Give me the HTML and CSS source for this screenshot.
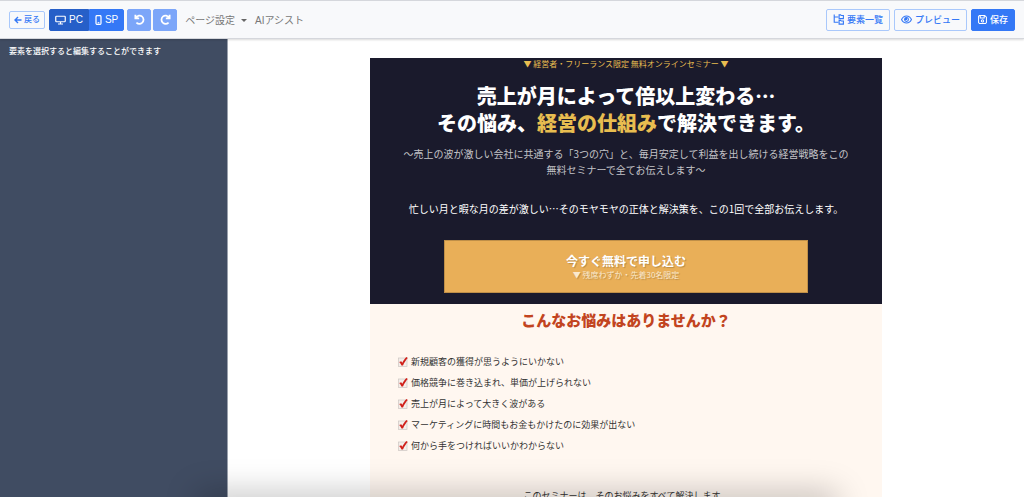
FILE: index.html
```
<!DOCTYPE html>
<html lang="ja">
<head>
    <meta charset="UTF-8">
    <meta name="viewport" content="width=device-width, initial-scale=1.0">
    <title>ページ編集</title>
    <link rel="stylesheet" href="styles.css">
</head>
<body>
    <svg class="defs" aria-hidden="true">
        <symbol id="check" viewBox="0 0 20 20">
            <rect x="1" y="2" width="17" height="17" fill="#f4eeea" stroke="#cfc9c5" stroke-width="1.500"/>
            <path d="M2.500 10l4-1.500 2 3C11 7 14 2.500 17 0l2.500 2C16 6 12.500 11 10 17H7C6 14.500 4.500 12 2.500 10z" fill="#d0201a"/>
        </symbol>
    </svg>

    <header class="toolbar">
        <a class="btn btn-outline btn-back" href="#">
            <svg class="icon-sm" viewBox="0 0 16 16" fill="none" stroke="currentColor" stroke-width="2.800"><path d="M15 8H2M8 2L2 8l6 6"/></svg>
            戻る
        </a>
        <div class="btn-group">
            <button class="btn btn-primary active">
                <svg class="icon-pc" viewBox="0 0 22 18" fill="none" stroke="currentColor" stroke-width="2.400"><rect x="1.500" y="1.500" width="19" height="11" rx="1.500"/><path d="M11 13v4M6 17h10"/></svg>
                PC
            </button>
            <button class="btn btn-primary">
                <svg class="icon-sp" viewBox="0 0 12 18" fill="none" stroke="currentColor" stroke-width="2.200"><rect x="1.500" y="1" width="9" height="16" rx="2"/><path d="M4.500 14h3"/></svg>
                SP
            </button>
        </div>
        <div class="history">
            <button class="btn btn-primary" aria-label="元に戻す" disabled>
                <svg class="icon" viewBox="0 0 16 16" fill="none" stroke="currentColor" stroke-width="2.600"><path d="M2 1v5.500h5.500M2.500 6C5 2 9 1.500 11.500 3.500c3 2.500 3 6.500.5 9-2.500 2.300-6 2.200-8.500 0"/></svg>
            </button>
            <button class="btn btn-primary" aria-label="やり直す" disabled>
                <svg class="icon" viewBox="0 0 16 16" fill="none" stroke="currentColor" stroke-width="2.600"><path d="M14 1v5.500H8.500M13.500 6C11 2 7 1.500 4.500 3.500c-3 2.500-3 6.500-.5 9 2.500 2.300 6 2.200 8.500 0"/></svg>
            </button>
        </div>
        <nav class="menu">
            <a class="dropdown" href="#">ページ設定</a>
            <a href="#">AIアシスト</a>
        </nav>
        <div class="actions">
            <button class="btn btn-outline">
                <svg class="icon" viewBox="0 0 18 18" fill="none" stroke="currentColor" stroke-width="1.800"><path d="M2 1v12.500h7M2 5h7"/><path d="M10 1.500h2.500l1 1H17v5h-7zM10 10.500h2.500l1 1H17v5h-7z"/></svg>
                要素一覧
            </button>
            <button class="btn btn-outline">
                <svg class="icon" viewBox="0 0 20 16" fill="none" stroke="currentColor" stroke-width="2"><path d="M1 8c4-8.500 14-8.500 18 0-4 8.500-14 8.500-18 0z"/><circle cx="10" cy="8" r="3.500"/><circle cx="9" cy="7" r="1.200" fill="currentColor"/></svg>
                プレビュー
            </button>
            <button class="btn btn-primary">
                <svg class="icon-sm" viewBox="0 0 16 16" fill="none" stroke="currentColor" stroke-width="1.800"><path d="M1 2.500L2.500 1H12l3 3v9.500L13.500 15h-11L1 13.500zM4 1v4.500h7V1"/><circle cx="8" cy="10.500" r="2"/></svg>
                保存
            </button>
        </div>
    </header>

    <div class="editor">
        <aside class="sidebar">
            <p>要素を選択すると編集することができます</p>
        </aside>
        <main class="canvas">
            <article class="page">
                <section class="hero">
                    <p class="hero-label">▼ 経営者・フリーランス限定 無料オンラインセミナー ▼</p>
                    <h1>売上が月によって倍以上変わる…<br>その悩み、<em>経営の仕組み</em>で解決できます。</h1>
                    <p class="hero-sub">〜売上の波が激しい会社に共通する「3つの穴」と、毎月安定して利益を出し続ける経営戦略をこの<br>無料セミナーで全てお伝えします〜</p>
                    <p class="hero-lead">忙しい月と暇な月の差が激しい…そのモヤモヤの正体と解決策を、この1回で全部お伝えします。</p>
                    <a class="cta" href="#">
                        <strong>今すぐ無料で申し込む</strong>
                        <small>▼ 残席わずか・先着30名限定</small>
                    </a>
                </section>
                <section class="worries">
                    <h2>こんなお悩みはありませんか？</h2>
                    <ul>
                        <li><svg class="check"><use href="#check"/></svg>新規顧客の獲得が思うようにいかない</li>
                        <li><svg class="check"><use href="#check"/></svg>価格競争に巻き込まれ、単価が上げられない</li>
                        <li><svg class="check"><use href="#check"/></svg>売上が月によって大きく波がある</li>
                        <li><svg class="check"><use href="#check"/></svg>マーケティングに時間もお金もかけたのに効果が出ない</li>
                        <li><svg class="check"><use href="#check"/></svg>何から手をつければいいかわからない</li>
                    </ul>
                    <p class="worries-end">このセミナーは、そのお悩みをすべて解決します。</p>
                </section>
            </article>
        </main>
    </div>
    <div class="bottom-shade"></div>
</body>
</html>
```

FILE: styles.css
```
* {
    box-sizing: border-box;
}
body {
    margin: 0;
    height: 100vh;
    display: flex;
    flex-direction: column;
    overflow: hidden;
    font-family: "Liberation Sans", "Noto Sans CJK JP", sans-serif;
    font-size: 10px;
    color: #333;
    background-color: #fff;
}
h1, h2, p, ul {
    margin: 0;
    padding: 0;
}
a {
    color: inherit;
    text-decoration: none;
}
.defs {
    position: absolute;
    width: 0;
    height: 0;
}

/* toolbar */
.toolbar {
    display: flex;
    align-items: center;
    gap: 4px;
    height: 39px;
    flex-shrink: 0;
    padding: 0 9px;
    background-color: #f8f9fb;
    border-top: 1px solid #d5d7dc;
    border-bottom: 1px solid #d5d7dc;
    box-shadow: 0 1px 2px rgba(0, 0, 0, 0.15);
    z-index: 1;
}
.btn {
    display: inline-flex;
    align-items: center;
    justify-content: center;
    gap: 3px;
    height: 22px;
    padding: 0 6px;
    border: 1px solid #3478f6;
    border-radius: 2px;
    font-family: inherit;
    font-size: 9px;
    font-weight: 500;
    line-height: 12px;
    white-space: nowrap;
    cursor: pointer;
}
.btn-outline {
    color: #3478f6;
    background-color: #f8f9fb;
    border-color: #a9c8fb;
}
.btn-primary {
    color: #fff;
    background-color: #3478f6;
}
.btn-primary.active {
    background-color: #265fc8;
    border-color: #265fc8;
}
.btn-primary:disabled {
    background-color: #7ca6f9;
    border-color: #7ca6f9;
    cursor: default;
}
.btn-back {
    height: 18px;
    padding: 0 4px;
    gap: 2px;
    font-size: 8px;
}
.btn-group {
    display: flex;
}
.btn-group .btn {
    padding: 0 5px;
    gap: 3px;
    font-size: 10px;
}
.btn-group .btn:first-child {
    border-radius: 2px 0 0 2px;
}
.btn-group .btn:last-child {
    border-radius: 0 2px 2px 0;
}
.history {
    display: flex;
    gap: 2px;
    margin-left: -1px;
}
.history .btn {
    width: 24px;
    padding: 0;
}
.icon {
    width: 11px;
    height: 11px;
}
.icon-sm {
    width: 9px;
    height: 9px;
}
.icon-pc {
    width: 11px;
    height: 10px;
}
.icon-sp {
    width: 7px;
    height: 10px;
}
.btn-back .icon-sm {
    width: 8px;
    height: 8px;
}
.menu {
    display: flex;
    gap: 8px;
    padding-left: 4px;
    color: #777;
}
.dropdown::after {
    content: "";
    display: inline-block;
    margin-left: 6px;
    vertical-align: 2px;
    border: 3px solid transparent;
    border-top-color: #666;
    border-bottom: 0;
}
.actions {
    display: flex;
    gap: 4px;
    margin-left: auto;
}

/* editor */
.editor {
    display: flex;
    flex: 1;
    min-height: 0;
}
.sidebar {
    width: 228px;
    flex-shrink: 0;
    padding: 7px 9px;
    color: #fff;
    font-size: 8px;
    font-weight: 500;
    line-height: 12px;
    background-color: #404c62;
    border-right: 1px solid #9aa1ad;
}
.canvas {
    flex: 1;
    padding: 19px 20px 0;
    overflow: hidden;
}
.page {
    max-width: 512px;
    margin: 0 auto;
    text-align: center;
    font-family: "Noto Sans CJK JP", sans-serif;
}
.hero {
    padding-bottom: 11px;
    color: #fff;
    background-color: #1a1a2c;
}
.hero-label {
    font-size: 8px;
    line-height: 12px;
    color: #e8bd50;
}
.hero h1 {
    margin-top: 12px;
    font-size: 20px;
    font-weight: 900;
    line-height: 27px;
}
.hero em {
    font-style: normal;
    color: #e8bd50;
}
.hero-sub {
    margin-top: 10px;
    line-height: 16px;
    color: #c4c4c8;
}
.hero-lead {
    margin-top: 23px;
    line-height: 16px;
}
.cta {
    display: flex;
    flex-direction: column;
    width: 71%;
    margin: 23px auto 0;
    padding: 11px 0;
    background-color: #e9af58;
    border: 1px solid #bf8f48;
    text-shadow: 1px 1px 1px rgba(0, 0, 0, 0.2);
}
.cta strong {
    font-size: 12px;
    line-height: 17px;
}
.cta small {
    font-size: 8px;
    line-height: 12px;
    color: #fbe9cd;
}
.worries {
    padding: 5px 28px 40px;
    background-color: #fff7f0;
}
.worries h2 {
    font-size: 15px;
    font-weight: 900;
    line-height: 22px;
    color: #c24420;
}
.worries ul {
    margin-top: 20px;
    list-style: none;
    text-align: left;
}
.worries li {
    display: flex;
    align-items: center;
    gap: 3px;
    font-size: 9px;
    line-height: 21px;
}
.check {
    width: 10px;
    height: 10px;
}
.worries-end {
    margin-top: 32px;
    font-size: 9px;
    line-height: 16px;
}

/* soft shade along the bottom edge of the window */
.bottom-shade {
    position: fixed;
    left: 20%;
    right: 19%;
    bottom: -14px;
    height: 10px;
    box-shadow: 0 0 32px 8px rgba(0, 0, 0, 0.25);
    pointer-events: none;
    z-index: 2;
}
```
